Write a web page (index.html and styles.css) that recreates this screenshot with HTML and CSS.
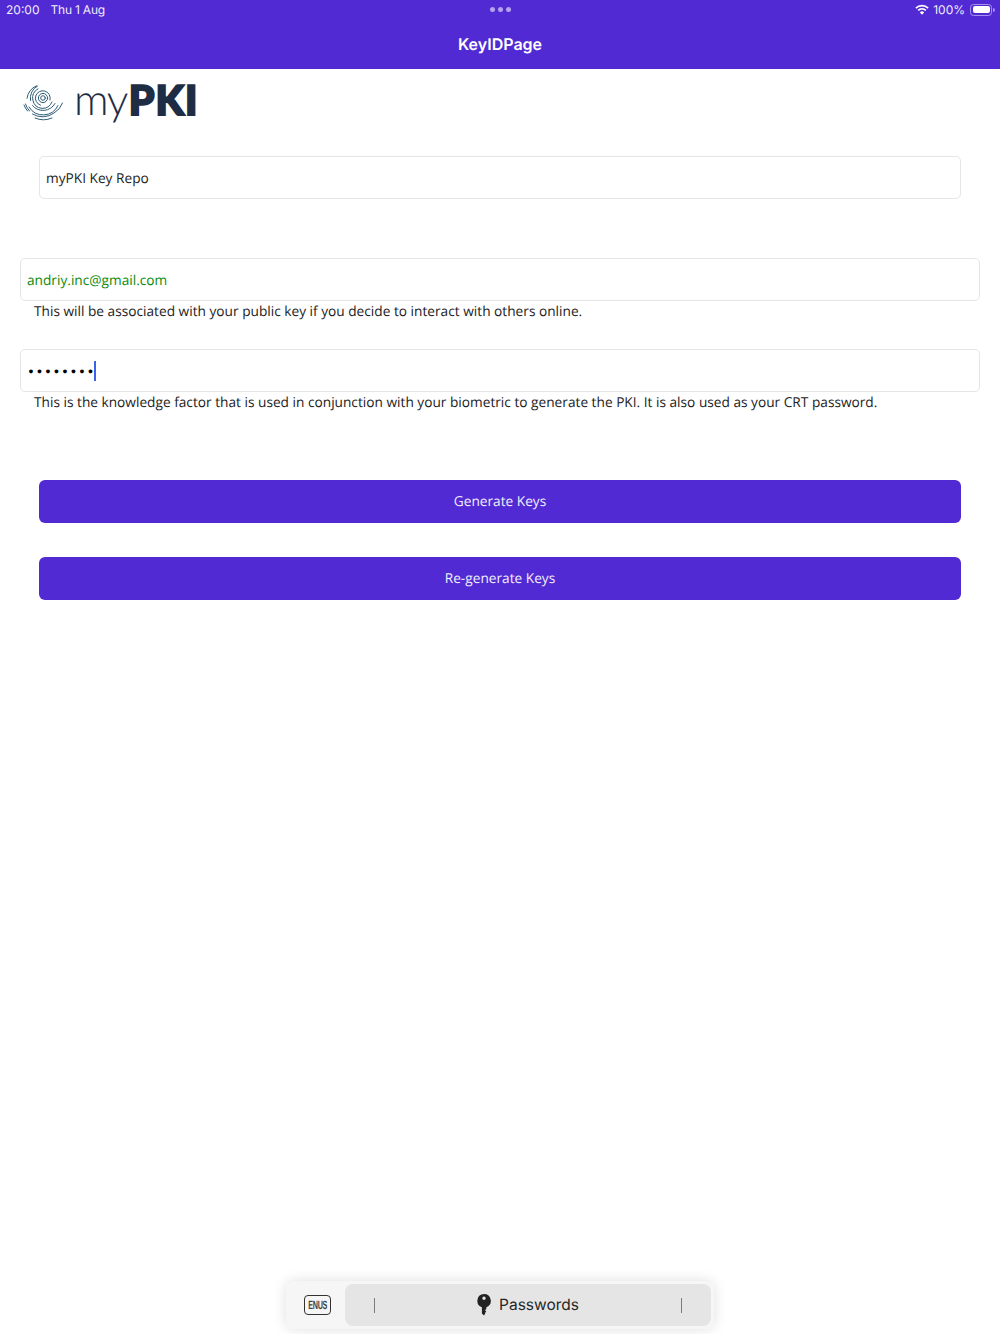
FILE: index.html
```html
<!DOCTYPE html>
<html lang="en">
<head>
  <meta charset="UTF-8">
  <meta name="viewport" content="width=device-width, initial-scale=1.0">
  <title>KeyIDPage</title>
  <link rel="stylesheet" href="styles.css">
</head>
<body>

  <header class="app-header">
    <div class="status-bar">
      <div class="status-left"><span>20:00</span><span class="status-date">Thu 1 Aug</span></div>
      <div class="status-dots"><i></i><i></i><i></i></div>
      <div class="status-right">
        <svg class="wifi" width="14" height="11" viewBox="0 0 16 12">
          <path d="M1 4.400a10 10 0 0 1 14 0" fill="none" stroke="#fff" stroke-width="1.800"/>
          <path d="M3.600 7a6.400 6.400 0 0 1 8.800 0" fill="none" stroke="#fff" stroke-width="1.800"/>
          <path d="M8 12 5.600 9.300a3.400 3.400 0 0 1 4.800 0z" fill="#fff"/>
        </svg>
        <span>100%</span>
        <span class="battery"><b></b></span>
        <span class="battery-nub"></span>
      </div>
    </div>
    <h1>KeyIDPage</h1>
  </header>

  <main class="content">
    <div class="logo">
      <svg width="41" height="36" viewBox="0 0 41 36" fill="none" stroke="#2f5d78" stroke-width="1" stroke-linecap="round">
        <circle cx="20" cy="13" r="2.300"/>
        <circle cx="20" cy="13" r="4.600"/>
        <path d="M27 15a7.400 7.400 0 1 0-9.500 5.200"/>
        <path d="M15 3.800a10.500 10.500 0 0 0 4 19.600 10.500 10.500 0 0 0 10-6.400"/>
        <path d="M14.500 1a13.500 13.500 0 0 0-7 14.500M9.500 20.500a13.500 13.500 0 0 0 22.500-2"/>
        <path d="M13.500.8a16 16 0 0 0-9.500 12.500M6 22a16.500 16.500 0 0 0 29-1.500"/>
        <path d="M2.500 19a19 19 0 0 0 4 7M9.500 29a19 19 0 0 0 21.500-1 19 19 0 0 0 8.500-10"/>
        <path d="M1 20a20 20 0 0 0 3.500 6M12 33a21 21 0 0 0 17 0"/>
      </svg>
      <div class="logo-text"><span class="logo-my">my</span><span class="logo-pki">PKI</span></div>
    </div>

    <div class="field field-narrow">myPKI Key Repo</div>

    <div class="field field-wide field-email">andriy.inc@gmail.com</div>
    <p class="hint">This will be associated with your public key if you decide to interact with others online.</p>

    <div class="field field-wide field-password">
      <span class="dots">••••••••</span><span class="caret"></span>
    </div>
    <p class="hint">This is the knowledge factor that is used in conjunction with your biometric to generate the PKI. It is also used as your CRT password.</p>

    <button class="btn btn-first">Generate Keys</button>
    <button class="btn">Re-generate Keys</button>
  </main>

  <div class="keyboard-bar">
    <div class="lang-key"><span>ENUS</span></div>
    <div class="suggestion">
      <span class="divider"></span>
      <div class="suggestion-label">
        <svg width="14" height="22" viewBox="0 0 14 22">
          <path d="M7 0a6.800 6.800 0 0 1 2.300 13.200V15l-1.300 1.200 1.300 1.200-1 1-.3 1.500L7 21.500 4.900 19.500V13.200A6.800 6.800 0 0 1 7 0zm0 2.600a1.700 1.700 0 1 0 0 3.400 1.700 1.700 0 0 0 0-3.400z" fill="#222" fill-rule="evenodd"/>
        </svg>
        <span class="suggestion-text">Passwords</span>
      </div>
      <span class="divider"></span>
    </div>
  </div>

</body>
</html>
```

FILE: styles.css
```css
* {
  box-sizing: border-box;
}

html, body {
  margin: 0;
  padding: 0;
}

body {
  width: 1000px;
  height: 1334px;
  overflow: hidden;
  display: flex;
  flex-direction: column;
  background-color: white;
  font-family: 'Open Sans', 'Liberation Sans', sans-serif;
  font-size: 13.700px;
  color: #1c1c1c;
  text-rendering: geometricPrecision;
}

.app-header {
  height: 69px;
  flex: none;
  background-color: #512ad3;
  color: white;
}

.status-bar {
  height: 19px;
  padding: 0 5px 0 6px;
  display: grid;
  grid-template-columns: 1fr auto 1fr;
  align-items: center;
  font-family: Inter, 'Liberation Sans', sans-serif;
  font-size: 12px;
  color: #f0ecfc;
}

.status-left {
  display: flex;
  gap: 11px;
}

.status-date {
  letter-spacing: -0.2px;
}

.status-dots {
  display: flex;
  gap: 3px;
}

.status-dots i {
  width: 5px;
  height: 5px;
  border-radius: 50%;
  background-color: #b6a3ee;
}

.status-right {
  display: flex;
  justify-content: flex-end;
  align-items: center;
  gap: 4px;
}

.battery {
  width: 22px;
  height: 12px;
  margin-left: 1px;
  padding: 1.500px;
  border: 1px solid #a592ea;
  border-radius: 3.500px;
  display: flex;
}

.battery b {
  flex: 1;
  background-color: white;
  border-radius: 2px;
}

.battery-nub {
  width: 2px;
  height: 4px;
  margin-left: -3px;
  background-color: #a592ea;
  border-radius: 0 2px 2px 0;
}

.app-header h1 {
  margin: 0;
  padding-top: 6px;
  text-align: center;
  font-family: Inter, 'Liberation Sans', sans-serif;
  font-size: 16px;
  line-height: 38px;
  font-weight: 600;
}

.content {
  display: flex;
  flex-direction: column;
}

.logo {
  height: 87px;
  padding: 16px 0 0 23px;
  display: flex;
  align-items: flex-start;
  gap: 10px;
}

.logo-text {
  color: #1f2d44;
  line-height: 40px;
  margin-top: -5px;
  white-space: nowrap;
}

.logo-my {
  font-family: Lato, sans-serif;
  font-weight: 300;
  font-size: 43px;
  letter-spacing: -1.500px;
}

.logo-pki {
  font-family: Lato, sans-serif;
  font-weight: 900;
  font-size: 41px;
  letter-spacing: 1px;
  -webkit-text-stroke: 2px #1f2d44;
  margin-left: 2px;
}

.field {
  height: 43px;
  padding: 2px 6px 0;
  display: flex;
  align-items: center;
  background-color: white;
  border: 1px solid #e6e6e6;
  border-radius: 5px;
  line-height: 20px;
}

.field-narrow {
  margin: 0 39px 59px;
}

.field-wide {
  margin: 0 20px;
}

.field-email {
  color: #0a8a0a;
}

.field-password {
  margin-top: 29px;
  padding-top: 0;
}

.dots {
  padding-left: 1.500px;
  font-family: 'Liberation Sans', sans-serif;
  font-size: 14px;
  letter-spacing: 3.600px;
  color: black;
}

.caret {
  width: 2px;
  height: 20px;
  margin-left: -3px;
  background-color: #3b62e8;
}

.hint {
  margin: 0;
  padding: 1px 0 0 34px;
  height: 19px;
  line-height: 19px;
}

.btn {
  height: 43px;
  margin: 0 39px 34px;
  padding-bottom: 2px;
  background-color: #512ad3;
  color: #f2effc;
  border: none;
  border-radius: 6px;
  font-family: 'Open Sans', 'Liberation Sans', sans-serif;
  font-size: 13.700px;
  text-rendering: geometricPrecision;
}

.btn-first {
  margin-top: 69px;
}

.keyboard-bar {
  width: 428px;
  height: 48px;
  margin: auto 0 5px 286px;
  padding: 3px;
  display: flex;
  align-items: stretch;
  background-color: #f6f6f6;
  border-radius: 8px;
  box-shadow: 0 0 14px rgba(0, 0, 0, 0.13);
}

.lang-key {
  width: 27px;
  height: 20px;
  flex: none;
  align-self: center;
  margin: 0 14px 0 15px;
  display: flex;
  align-items: center;
  justify-content: center;
  border: 1.400px solid #333;
  border-radius: 4px;
  overflow: visible;
}

.lang-key span {
  font-family: 'Liberation Sans', sans-serif;
  font-size: 12px;
  font-weight: 700;
  line-height: 1;
  color: #444;
  transform: scaleX(0.6);
  letter-spacing: -0.500px;
}

.suggestion {
  flex: 1;
  padding: 0 29px;
  display: flex;
  align-items: center;
  justify-content: space-between;
  background-color: #e5e5e5;
  border-radius: 8px;
  font-family: Inter, 'Liberation Sans', sans-serif;
  font-size: 15.500px;
  color: #262626;
}

.divider {
  width: 1px;
  height: 15px;
  background-color: #7d7d7d;
}

.suggestion-label {
  display: flex;
  align-items: center;
  gap: 8px;
}

.suggestion-text {
  padding-bottom: 2px;
}
```
